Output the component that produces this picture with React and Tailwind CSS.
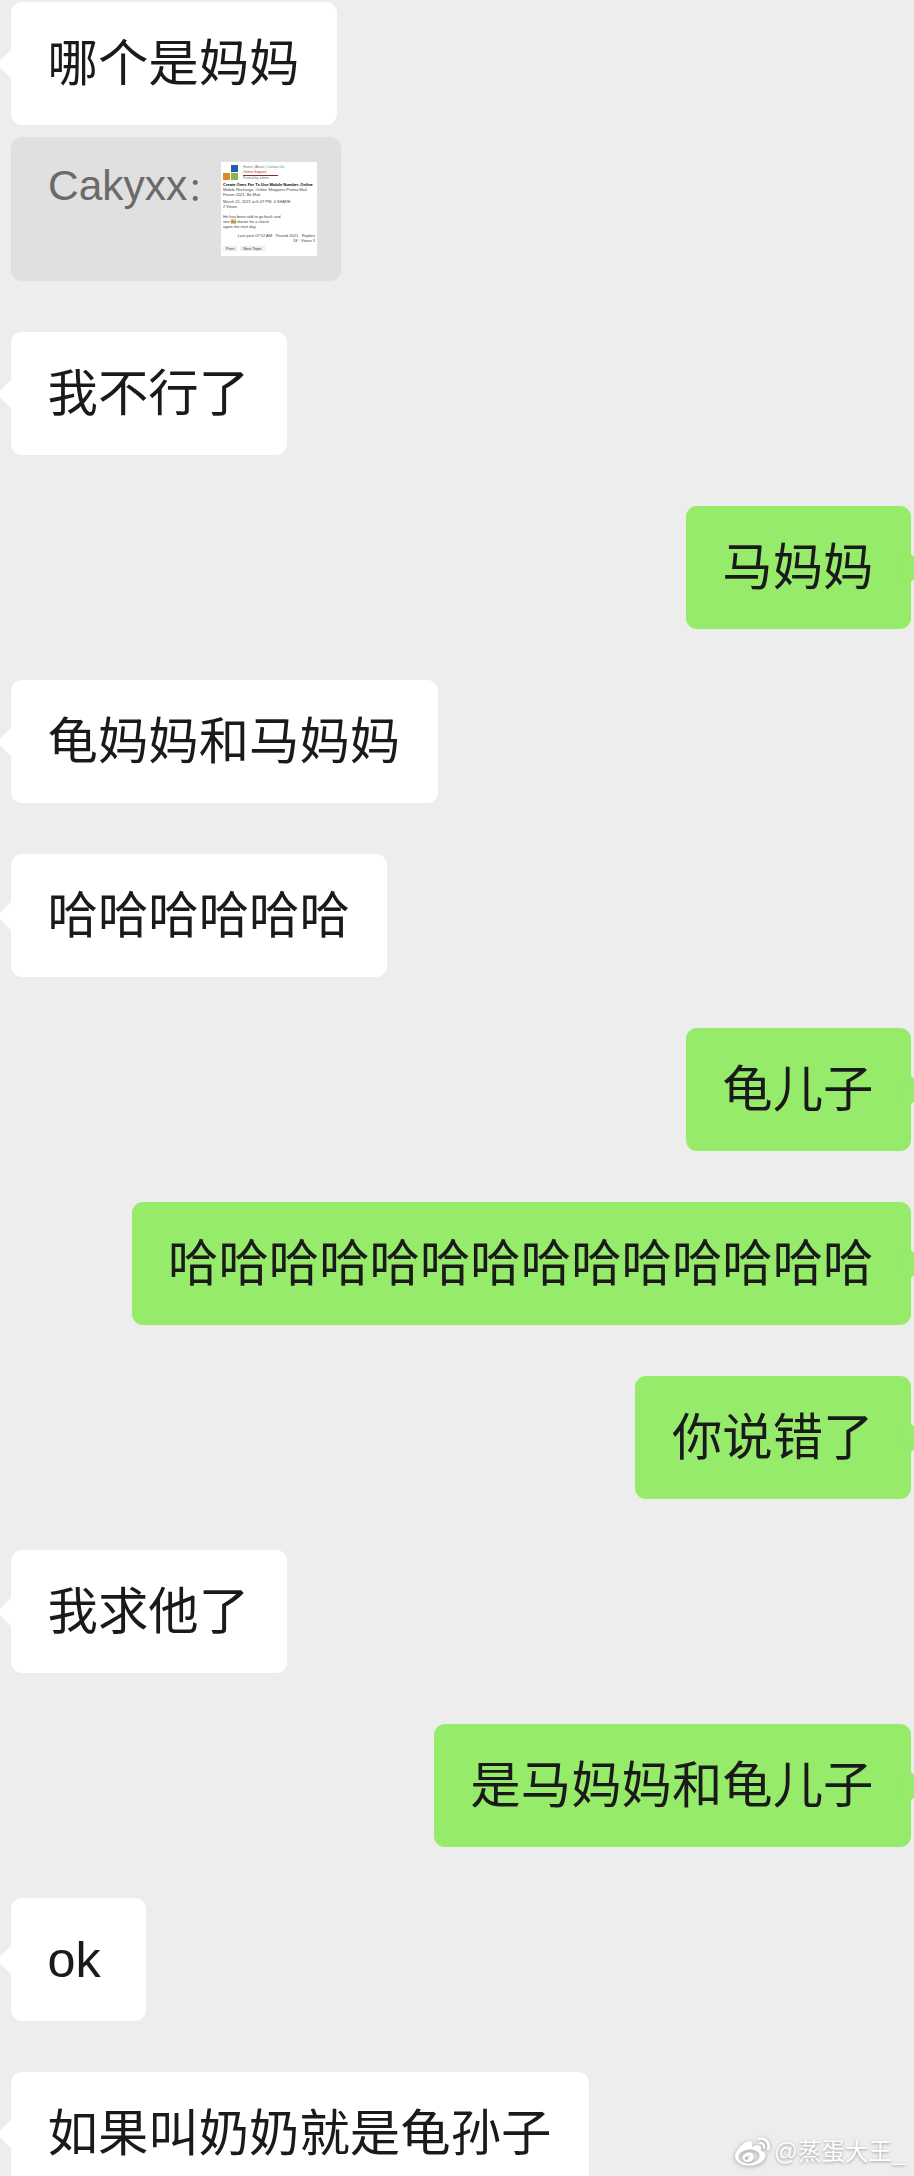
import { FaWeibo } from 'react-icons/fa'

const FONT = "font-['Liberation_Sans','Noto_Sans_CJK_SC',sans-serif]"

function Bubble({ side, children }) {
  const mine = side === 'right'
  return (
    <div className={`flex ${mine ? 'justify-end pr-[3px]' : 'justify-start pl-[11px]'}`}>
      <div
        className={`relative flex h-[123px] min-w-[135px] items-center rounded-[11px] pr-[37px] pl-[37px] text-[50.4px] leading-none whitespace-nowrap text-[#1a1a1a] ${
          mine ? 'bg-[#97eb6b]' : 'bg-white'
        }`}
      >
        {/* 气泡尖角 */}
        <span
          className={`absolute top-1/2 size-[21px] -translate-y-1/2 rotate-45 rounded-[3px] ${
            mine ? 'right-[-10px] bg-[#97eb6b]' : 'left-[-10px] bg-white'
          }`}
        />
        <span className="relative top-[1px] left-[-0.5px]">{children}</span>
      </div>
    </div>
  )
}

/** 引用消息里的小截图 */
function QuoteThumb() {
  return (
    <div className="h-[94px] w-[96px] overflow-hidden bg-white px-[2px] pt-[3px] font-['Liberation_Sans',sans-serif] text-[4px] leading-[5px] whitespace-nowrap text-[#444]">
      <div className="flex h-[17px] gap-[5px]">
        <div className="grid size-[15px] shrink-0 grid-cols-2 gap-px">
          <span />
          <span className="bg-[#1d5fa8]" />
          <span className="bg-[#de8a2b]" />
          <span className="bg-[#8ab548]" />
        </div>
        <div className="text-[3.5px]">
          <p className="text-[#777]">Home | About | Contact Us</p>
          <p className="w-[35px] border-b border-[#8a2a2a] text-[#a33]">Online Support</p>
          <p className="text-[#777]">Posted by admin</p>
        </div>
      </div>
      <p className="font-bold text-black">Create Ones For Tv Use Mobile Number, Online</p>
      <p>Mobile Recharge, Online Shoppers Promo Mail</p>
      <p>Forum 2021, Be Mail</p>
      <p className="mt-[2px]">March 21, 2021 at 6:47 PM, 4 SHARE</p>
      <p>2 Views</p>
      <p className="mt-[5px]">He has been told to go back and</p>
      <p>
        see <span className="bg-[#eec77a]">the</span> doctor for a check
      </p>
      <p>again the next day</p>
      <p className="mt-[4px] text-right">Last post 07:52 AM · Posted 2021 · Replies</p>
      <p className="text-right">18 · Views 3</p>
      <div className="mt-[3px] flex gap-[3px]">
        <span className="bg-[#eee] px-[3px]">Prev</span>
        <span className="bg-[#eee] px-[3px]">Next Topic</span>
      </div>
    </div>
  )
}

export default function App() {
  return (
    <div className={`relative h-[2176px] w-[914px] overflow-hidden bg-[#ededed] pt-[2px] ${FONT}`}>
      <Bubble side="left">哪个是妈妈</Bubble>

      {/* 引用 */}
      <div className="mt-[12px] ml-[11px] flex h-[144px] w-[330px] rounded-[11px] bg-[#e0e0e0] pt-[25px] pl-[37px]">
        <span className="w-[173px] pt-[1px] text-[42.5px] leading-[46px] whitespace-nowrap text-[#6a6a6a]">
          Cakyxx<span className="text-[32px]">：</span>
        </span>
        <QuoteThumb />
      </div>

      <div className="mt-[51px] flex flex-col gap-[51px]">
        <Bubble side="left">我不行了</Bubble>
        <Bubble side="right">马妈妈</Bubble>
        <Bubble side="left">龟妈妈和马妈妈</Bubble>
        <Bubble side="left">哈哈哈哈哈哈</Bubble>
        <Bubble side="right">龟儿子</Bubble>
        <Bubble side="right">哈哈哈哈哈哈哈哈哈哈哈哈哈哈</Bubble>
        <Bubble side="right">你说错了</Bubble>
        <Bubble side="left">我求他了</Bubble>
        <Bubble side="right">是马妈妈和龟儿子</Bubble>
        <Bubble side="left">ok</Bubble>
        <Bubble side="left">如果叫奶奶就是龟孙子</Bubble>
      </div>

      {/* 水印 */}
      <div className="absolute right-[9px] bottom-[6px] flex items-center gap-[4px] text-[23.5px] leading-none text-white [text-shadow:0_1px_3px_rgba(0,0,0,0.35)]">
        <FaWeibo className="size-[35px] drop-shadow-[0_1px_2px_rgba(0,0,0,0.35)]" />
        <span>@蒸蛋大王_</span>
      </div>
    </div>
  )
}
